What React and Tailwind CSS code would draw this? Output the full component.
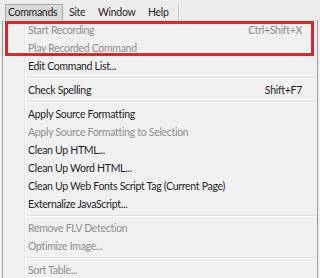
import React from "react";

const items = [
  { t: "Start Recording", d: true, s: "Ctrl+Shift+X" },
  { t: "Play Recorded Command", d: true },
  { t: "Edit Command List..." },
  "sep",
  { t: "Check Spelling", s: "Shift+F7" },
  "sep",
  { t: "Apply Source Formatting" },
  { t: "Apply Source Formatting to Selection", d: true },
  { t: "Clean Up HTML..." },
  { t: "Clean Up Word HTML..." },
  { t: "Clean Up Web Fonts Script Tag (Current Page)" },
  { t: "Externalize JavaScript..." },
  "sep",
  { t: "Remove FLV Detection", d: true },
  { t: "Optimize Image...", d: true },
  "sep",
  { t: "Sort Table...", d: true },
];

export default function App() {
  return (
    <div className="relative w-[320px] h-[278px] overflow-hidden bg-[#f0f0f0] font-['Lato',sans-serif] text-[10.5px] tracking-[-0.3px] leading-none text-[#1e1e1e]">
      <div className="h-[20px] flex items-end bg-[#ececec] pl-[5px]">
        <div className="h-[16px] w-[58px] flex items-center pl-[2px] border border-b-0 border-[#a9a9a9] bg-[#d9d9d9]">Commands</div>
        <div className="h-[16px] flex items-center pl-[6px] w-[30px]">Site</div>
        <div className="h-[16px] flex items-center pl-[5px] w-[49px]">Window</div>
        <div className="h-[16px] flex items-center pl-[6px] w-[36px]">Help</div>
        <div className="h-[16px] w-px bg-[#c8c8c8]" />
      </div>
      <div className="ml-[2px] w-[316px] flex border-l border-r border-t border-[#979797] border-t-[#d4d4d4] bg-[#f0f0f0]">
        <div className="w-[21px] shrink-0" />
        <div className="w-px bg-[#e2e3e3]" />
        <div className="w-px bg-white" />
        <div className="flex-1 flex flex-col">
          {items.map((it, i) =>
            it === "sep" ? (
              <div key={i} className="h-[6px] flex flex-col justify-center">
                <div className="h-px bg-[#e0e0e0]" />
                <div className="h-px bg-white" />
              </div>
            ) : (
              <div
                key={i}
                className={
                  "h-[18px] flex items-center justify-between pl-[2px] pr-[15px] " +
                  (it.d ? "text-[#8d8d8d]" : "text-[#1e1e1e]")
                }
              >
                <span>{it.t}</span>
                {it.s && <span>{it.s}</span>}
              </div>
            )
          )}
        </div>
      </div>
      <div className="absolute left-[5px] top-[21px] w-[309px] h-[35px] border-[3px] border-[#e8202a]" />
    </div>
  );
}
